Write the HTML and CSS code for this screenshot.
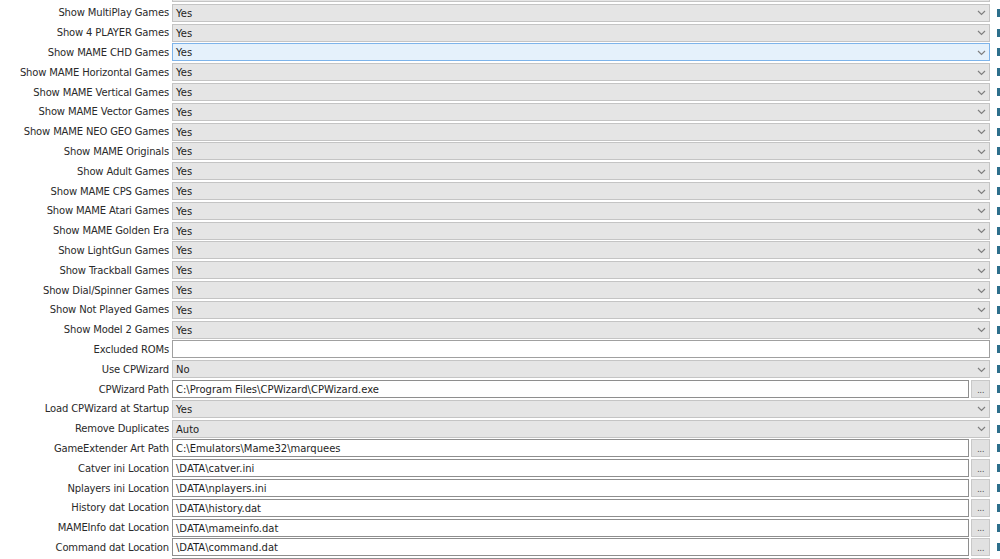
FILE: index.html
```html
<!DOCTYPE html>
<html>
<head>
<meta charset="utf-8">
<link rel="stylesheet" href="styles.css">
</head>
<body>
<div class="form">
  <div class="label"></div>
  <div class="select"><span class="val"></span><svg class="chev" width="9" height="6" viewBox="0 0 9 6"><path d="M1 1 L4.5 4.5 L8 1" fill="none" stroke="#7f7f7f" stroke-width="1.2"/></svg></div>
  <div class="mark"></div>

  <div class="label">Show MultiPlay Games</div>
  <div class="select"><span class="val">Yes</span><svg class="chev" width="9" height="6" viewBox="0 0 9 6"><path d="M1 1 L4.5 4.5 L8 1" fill="none" stroke="#7f7f7f" stroke-width="1.2"/></svg></div>
  <div class="mark"></div>

  <div class="label">Show 4 PLAYER Games</div>
  <div class="select"><span class="val">Yes</span><svg class="chev" width="9" height="6" viewBox="0 0 9 6"><path d="M1 1 L4.5 4.5 L8 1" fill="none" stroke="#7f7f7f" stroke-width="1.2"/></svg></div>
  <div class="mark"></div>

  <div class="label">Show MAME CHD Games</div>
  <div class="select hot"><span class="val">Yes</span><svg class="chev" width="9" height="6" viewBox="0 0 9 6"><path d="M1 1 L4.5 4.5 L8 1" fill="none" stroke="#7f7f7f" stroke-width="1.2"/></svg></div>
  <div class="mark"></div>

  <div class="label">Show MAME Horizontal Games</div>
  <div class="select"><span class="val">Yes</span><svg class="chev" width="9" height="6" viewBox="0 0 9 6"><path d="M1 1 L4.5 4.5 L8 1" fill="none" stroke="#7f7f7f" stroke-width="1.2"/></svg></div>
  <div class="mark"></div>

  <div class="label">Show MAME Vertical Games</div>
  <div class="select"><span class="val">Yes</span><svg class="chev" width="9" height="6" viewBox="0 0 9 6"><path d="M1 1 L4.5 4.5 L8 1" fill="none" stroke="#7f7f7f" stroke-width="1.2"/></svg></div>
  <div class="mark"></div>

  <div class="label">Show MAME Vector Games</div>
  <div class="select"><span class="val">Yes</span><svg class="chev" width="9" height="6" viewBox="0 0 9 6"><path d="M1 1 L4.5 4.5 L8 1" fill="none" stroke="#7f7f7f" stroke-width="1.2"/></svg></div>
  <div class="mark"></div>

  <div class="label">Show MAME NEO GEO Games</div>
  <div class="select"><span class="val">Yes</span><svg class="chev" width="9" height="6" viewBox="0 0 9 6"><path d="M1 1 L4.5 4.5 L8 1" fill="none" stroke="#7f7f7f" stroke-width="1.2"/></svg></div>
  <div class="mark"></div>

  <div class="label">Show MAME Originals</div>
  <div class="select"><span class="val">Yes</span><svg class="chev" width="9" height="6" viewBox="0 0 9 6"><path d="M1 1 L4.5 4.5 L8 1" fill="none" stroke="#7f7f7f" stroke-width="1.2"/></svg></div>
  <div class="mark"></div>

  <div class="label">Show Adult Games</div>
  <div class="select"><span class="val">Yes</span><svg class="chev" width="9" height="6" viewBox="0 0 9 6"><path d="M1 1 L4.5 4.5 L8 1" fill="none" stroke="#7f7f7f" stroke-width="1.2"/></svg></div>
  <div class="mark"></div>

  <div class="label">Show MAME CPS Games</div>
  <div class="select"><span class="val">Yes</span><svg class="chev" width="9" height="6" viewBox="0 0 9 6"><path d="M1 1 L4.5 4.5 L8 1" fill="none" stroke="#7f7f7f" stroke-width="1.2"/></svg></div>
  <div class="mark"></div>

  <div class="label">Show MAME Atari Games</div>
  <div class="select"><span class="val">Yes</span><svg class="chev" width="9" height="6" viewBox="0 0 9 6"><path d="M1 1 L4.5 4.5 L8 1" fill="none" stroke="#7f7f7f" stroke-width="1.2"/></svg></div>
  <div class="mark"></div>

  <div class="label">Show MAME Golden Era</div>
  <div class="select"><span class="val">Yes</span><svg class="chev" width="9" height="6" viewBox="0 0 9 6"><path d="M1 1 L4.5 4.5 L8 1" fill="none" stroke="#7f7f7f" stroke-width="1.2"/></svg></div>
  <div class="mark"></div>

  <div class="label">Show LightGun Games</div>
  <div class="select"><span class="val">Yes</span><svg class="chev" width="9" height="6" viewBox="0 0 9 6"><path d="M1 1 L4.5 4.5 L8 1" fill="none" stroke="#7f7f7f" stroke-width="1.2"/></svg></div>
  <div class="mark"></div>

  <div class="label">Show Trackball Games</div>
  <div class="select"><span class="val">Yes</span><svg class="chev" width="9" height="6" viewBox="0 0 9 6"><path d="M1 1 L4.5 4.5 L8 1" fill="none" stroke="#7f7f7f" stroke-width="1.2"/></svg></div>
  <div class="mark"></div>

  <div class="label">Show Dial/Spinner Games</div>
  <div class="select"><span class="val">Yes</span><svg class="chev" width="9" height="6" viewBox="0 0 9 6"><path d="M1 1 L4.5 4.5 L8 1" fill="none" stroke="#7f7f7f" stroke-width="1.2"/></svg></div>
  <div class="mark"></div>

  <div class="label">Show Not Played Games</div>
  <div class="select"><span class="val">Yes</span><svg class="chev" width="9" height="6" viewBox="0 0 9 6"><path d="M1 1 L4.5 4.5 L8 1" fill="none" stroke="#7f7f7f" stroke-width="1.2"/></svg></div>
  <div class="mark"></div>

  <div class="label">Show Model 2 Games</div>
  <div class="select"><span class="val">Yes</span><svg class="chev" width="9" height="6" viewBox="0 0 9 6"><path d="M1 1 L4.5 4.5 L8 1" fill="none" stroke="#7f7f7f" stroke-width="1.2"/></svg></div>
  <div class="mark"></div>

  <div class="label">Excluded ROMs</div>
  <div class="text full"></div>
  <div class="mark"></div>

  <div class="label">Use CPWizard</div>
  <div class="select"><span class="val">No</span><svg class="chev" width="9" height="6" viewBox="0 0 9 6"><path d="M1 1 L4.5 4.5 L8 1" fill="none" stroke="#7f7f7f" stroke-width="1.2"/></svg></div>
  <div class="mark"></div>

  <div class="label">CPWizard Path</div>
  <div class="pathrow"><div class="text">C:\Program Files\CPWizard\CPWizard.exe</div><div class="btn">...</div></div>
  <div class="mark"></div>

  <div class="label">Load CPWizard at Startup</div>
  <div class="select"><span class="val">Yes</span><svg class="chev" width="9" height="6" viewBox="0 0 9 6"><path d="M1 1 L4.5 4.5 L8 1" fill="none" stroke="#7f7f7f" stroke-width="1.2"/></svg></div>
  <div class="mark"></div>

  <div class="label">Remove Duplicates</div>
  <div class="select"><span class="val">Auto</span><svg class="chev" width="9" height="6" viewBox="0 0 9 6"><path d="M1 1 L4.5 4.5 L8 1" fill="none" stroke="#7f7f7f" stroke-width="1.2"/></svg></div>
  <div class="mark"></div>

  <div class="label">GameExtender Art Path</div>
  <div class="pathrow"><div class="text">C:\Emulators\Mame32\marquees</div><div class="btn">...</div></div>
  <div class="mark"></div>

  <div class="label">Catver ini Location</div>
  <div class="pathrow"><div class="text">\DATA\catver.ini</div><div class="btn">...</div></div>
  <div class="mark"></div>

  <div class="label">Nplayers ini Location</div>
  <div class="pathrow"><div class="text">\DATA\nplayers.ini</div><div class="btn">...</div></div>
  <div class="mark"></div>

  <div class="label">History dat Location</div>
  <div class="pathrow"><div class="text">\DATA\history.dat</div><div class="btn">...</div></div>
  <div class="mark"></div>

  <div class="label">MAMEInfo dat Location</div>
  <div class="pathrow"><div class="text">\DATA\mameinfo.dat</div><div class="btn">...</div></div>
  <div class="mark"></div>

  <div class="label">Command dat Location</div>
  <div class="pathrow"><div class="text">\DATA\command.dat</div><div class="btn">...</div></div>
  <div class="mark"></div>

  <div class="label"></div>
  <div class="pathrow"><div class="text"></div><div class="btn"></div></div>
  <div class="mark"></div>
</div>
</body>
</html>
```
FILE: styles.css
```css
html, body {
  margin: 0;
  padding: 0;
  background: #ffffff;
  overflow: hidden;
}
body {
  font-family: "DejaVu Sans", Verdana, sans-serif;
  font-size: 10px;
  color: #1e1e1e;
}
.form {
  display: grid;
  grid-template-columns: 172px 1fr 10px;
  grid-auto-rows: 19.8px;
  align-items: center;
  margin-top: -16.8px;
}
.label {
  text-align: right;
  padding-right: 3px;
  white-space: nowrap;
  color: #2a2a2a;
  letter-spacing: -0.15px;
}
.select {
  height: 18px;
  box-sizing: border-box;
  background: #e5e5e5;
  border: 1px solid #c4c4c4;
  display: flex;
  align-items: center;
  justify-content: space-between;
  padding: 1px 3px 0 3px;
}
.select.hot {
  background: #e5f1fb;
  border-color: #7eb4ea;
}
.chev {
  display: block;
}
.text {
  height: 18px;
  box-sizing: border-box;
  background: #ffffff;
  border: 1px solid #8e8e8e;
  padding: 1px 3px 0;
  display: flex;
  align-items: center;
  flex: 1;
  white-space: nowrap;
}
.text.full {
  border-color: #a0a0a0;
}
.pathrow {
  display: flex;
  gap: 2px;
  height: 18px;
}
.btn {
  width: 19px;
  height: 18px;
  box-sizing: border-box;
  background: #e1e1e1;
  border: 1px solid #c8c8c8;
  color: #555;
  font-size: 9px;
  display: flex;
  align-items: center;
  justify-content: center;
  letter-spacing: -0.5px;
  padding-top: 1px;
}
.mark {
  justify-self: end;
  width: 3px;
  height: 8px;
  background: #2d6f8c;
}
```
